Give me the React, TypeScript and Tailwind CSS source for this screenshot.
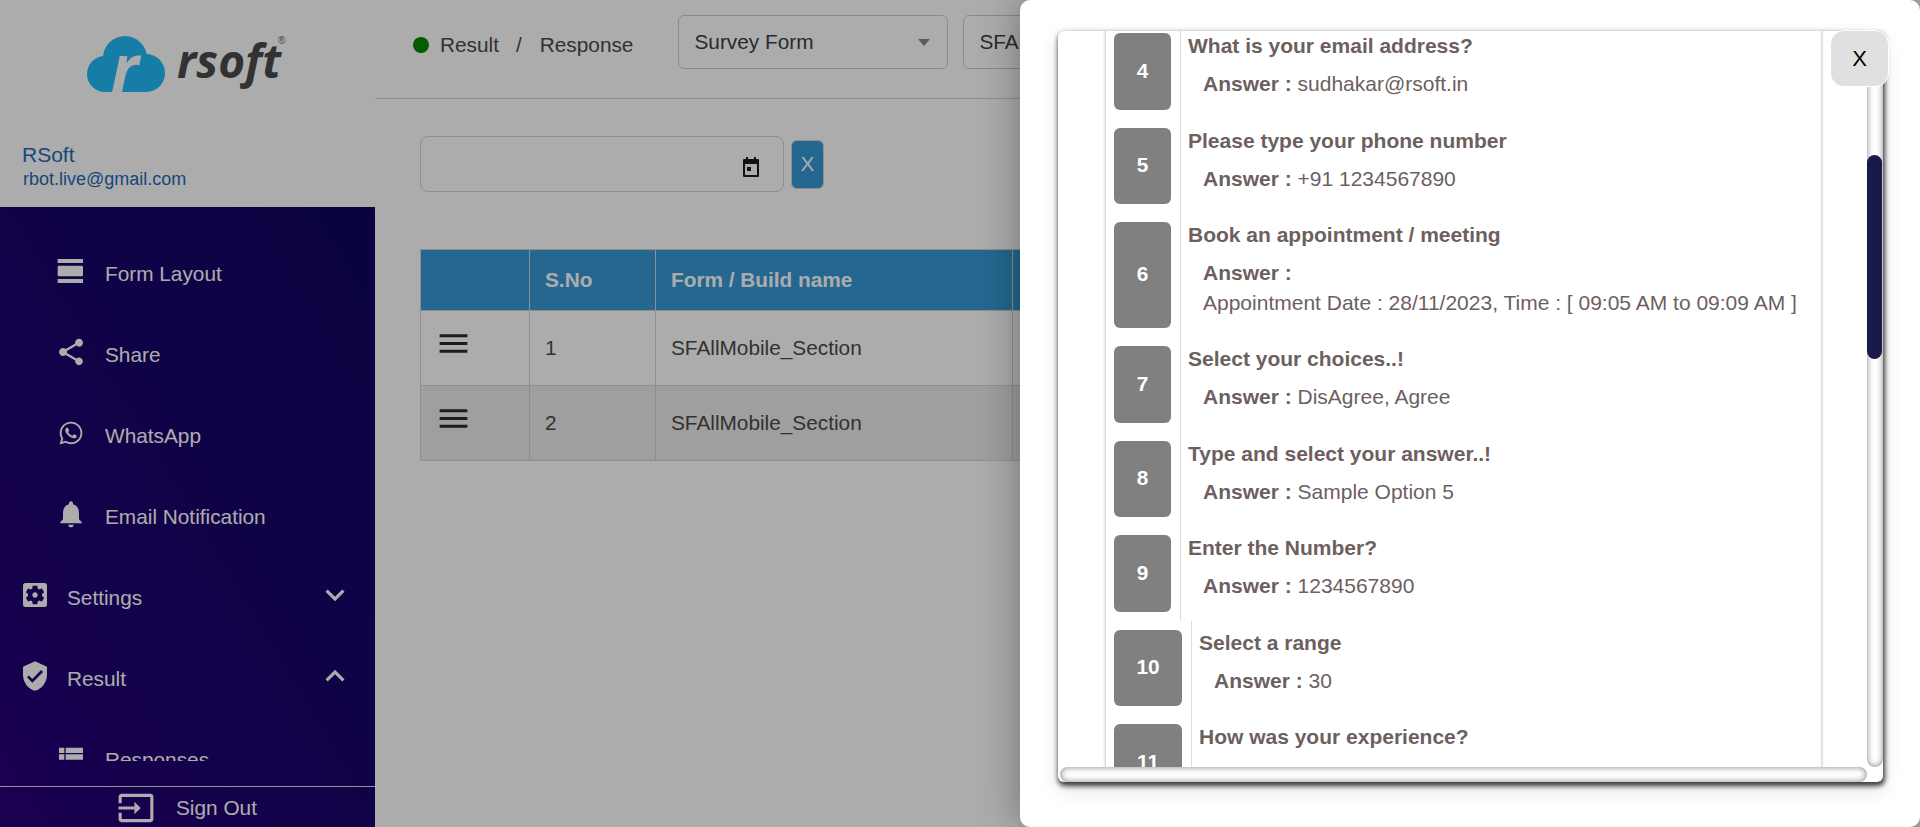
import {
  MdViewDay,
  MdShare,
  MdNotifications,
  MdSettingsApplications,
  MdVerifiedUser,
  MdKeyboardArrowDown,
  MdKeyboardArrowUp,
  MdViewList,
  MdInput,
  MdMenu,
} from "react-icons/md";
import { FaWhatsapp } from "react-icons/fa";
import type { ReactNode } from "react";

const subItem = "flex h-[81px] items-center gap-[18px] pl-[55px]";
const topItem = "flex h-[81px] items-center gap-4 pl-[19px] pr-[21px]";

function Logo() {
  return (
    <div className="flex h-[60px] items-start pl-[87px]">
      <svg width="78" height="57" viewBox="0 0 78 57" className="shrink-0">
        <g fill="#22bbf6">
          <circle cx="18" cy="38" r="18" />
          <circle cx="38" cy="22" r="22" />
          <circle cx="59" cy="37" r="19" />
          <rect x="18" y="30" width="41" height="26" />
        </g>
        <text x="24" y="56" fontSize="66" fontWeight="700" fontStyle="italic" fontFamily="'Open Sans', sans-serif" fill="#fff">
          r
        </text>
      </svg>
      <span className="ml-[12px] mt-[-8px] font-['Open_Sans',sans-serif] text-[46px] leading-[64px] font-bold italic text-[#4b4b4b]">rsoft</span>
      <span className="ml-[-3px] mt-[-1px] text-[10px] leading-3 text-[#666]">®</span>
    </div>
  );
}

function Sidebar() {
  return (
    <aside className="flex h-full w-[375px] shrink-0 flex-col bg-white shadow-[0_0_6px_rgba(0,0,0,0.35)]">
      <div className="h-[207px] shrink-0 pt-9">
        <Logo />
        <p className="mt-[47px] pl-[22px] text-[21px] leading-6 text-[#1f6bb8]">RSoft</p>
        <p className="mt-[2px] pl-[23px] text-[18px] leading-5 text-[#1f6bb8]">rbot.live@gmail.com</p>
      </div>
      <div className="flex min-h-0 flex-1 flex-col bg-gradient-to-tr from-[#260078] to-[#0e0560] text-[20.8px] text-white">
        <div className="h-[554px] shrink-0 overflow-hidden pt-[26px]">
          <div className={subItem}>
            <MdViewDay size={32} className="-mt-[6px]" />
            <span>Form Layout</span>
          </div>
          <div className={subItem}>
            <MdShare size={32} className="-mt-[6px]" />
            <span>Share</span>
          </div>
          <div className={subItem}>
            <span className="flex w-8 justify-center">
              <FaWhatsapp size={26} className="-mt-[6px]" />
            </span>
            <span>WhatsApp</span>
          </div>
          <div className={subItem}>
            <MdNotifications size={32} className="-mt-[6px]" />
            <span>Email Notification</span>
          </div>
          <div className={topItem}>
            <MdSettingsApplications size={32} className="-mt-[6px]" />
            <span className="flex-1">Settings</span>
            <MdKeyboardArrowDown size={38} className="-mt-[6px]" />
          </div>
          <div className={topItem}>
            <MdVerifiedUser size={32} className="-mt-[6px]" />
            <span className="flex-1">Result</span>
            <MdKeyboardArrowUp size={38} className="-mt-[6px]" />
          </div>
          <div className={subItem}>
            <MdViewList size={32} className="-mt-[6px]" />
            <span>Responses</span>
          </div>
        </div>
        <div className="mt-[25px] flex flex-1 items-center gap-[21px] border-t border-[#ddd] pt-[2px] pl-[117px]">
          <MdInput size={38} />
          <span>Sign Out</span>
        </div>
      </div>
    </aside>
  );
}

function Select({ label }: { label: string }) {
  return (
    <div className="flex h-[54px] w-[270px] shrink-0 items-center justify-between rounded-md border border-[#cfcfcf] pr-[17px] pl-[15px]">
      <span className="text-[20.8px] text-[#404040]">{label}</span>
      <span className="h-0 w-0 border-x-[6px] border-t-[7px] border-x-transparent border-t-[#888]" />
    </div>
  );
}

function Main() {
  const th = "border border-[#d4d4d4] pl-[15px] text-left text-[20.8px] font-bold text-white";
  const td = "border border-[#d4d4d4] pl-[15px] text-[20.8px] text-[#4a4a4a]";
  return (
    <main className="min-w-0 flex-1 overflow-hidden bg-white">
      <div className="flex h-[99px] items-center border-b border-[#d4d4d4] pb-[8px] pl-[38px]">
        <span className="h-4 w-4 shrink-0 rounded-full bg-[#008a00]" />
        <span className="ml-[11px] w-[59px] text-[20.8px] text-[#4a4a4a]">Result</span>
        <span className="ml-[17px] text-[20.8px] text-[#4a4a4a]">/</span>
        <span className="ml-[18px] text-[20.8px] text-[#4a4a4a]">Response</span>
        <div className="ml-[45px] -mt-[6px] flex gap-[15px]">
          <Select label="Survey Form" />
          <Select label="SFAllMobile_Section" />
        </div>
      </div>
      <div className="pt-[37px] pl-[45px]">
        <div className="flex items-center gap-[7px]">
          <div className="flex h-[56px] w-[364px] items-center justify-end rounded-lg border border-[#d4d4d4] pr-[23px]">
            <svg width="18" height="22" viewBox="0 0 18 22" className="mt-[5px] text-[#1c1c1c]">
              <path fill="currentColor" d="M4 1h2v2h6V1h2v2h2a1 1 0 0 1 1 1v16a1 1 0 0 1-1 1H2a1 1 0 0 1-1-1V4a1 1 0 0 1 1-1h2V1zM3 8v11h12V8H3zm2 3h4v4H5v-4z" />
            </svg>
          </div>
          <button className="h-[49px] w-[33px] rounded-md border border-[#d4d4d4] bg-[#3699d6] text-[20.8px] text-white">X</button>
        </div>
        <table className="mt-[57px] w-[900px] table-fixed border-collapse">
          <colgroup>
            <col className="w-[109px]" />
            <col className="w-[126px]" />
            <col className="w-[357px]" />
            <col />
          </colgroup>
          <thead>
            <tr className="h-[61px] bg-[#3699d6]">
              <th className={th} />
              <th className={th}>S.No</th>
              <th className={th}>Form / Build name</th>
              <th className={th} />
            </tr>
          </thead>
          <tbody>
            {[1, 2].map((n) => (
              <tr key={n} className={n === 2 ? "h-[75px] bg-[#ececec]" : "h-[75px]"}>
                <td className={td}>
                  <MdMenu size={37} className="-mt-[10px] ml-[-1px] text-[#2a2a2a]" />
                </td>
                <td className={td}>{n}</td>
                <td className={td}>SFAllMobile_Section</td>
                <td className={td} />
              </tr>
            ))}
          </tbody>
        </table>
      </div>
    </main>
  );
}

function Item({ n, question, tall, wide, children }: { n: number; question: string; tall?: boolean; wide?: boolean; children: ReactNode }) {
  return (
    <div className={tall ? "flex h-[124px]" : "flex h-[94.5px]"}>
      <div className={wide ? "my-[9px] flex w-[68px] shrink-0 items-center justify-center rounded-md bg-[#808080] pb-[2px] text-[20.8px] font-bold text-white" : "my-[9px] flex w-[57px] shrink-0 items-center justify-center rounded-md bg-[#808080] pb-[2px] text-[20.8px] font-bold text-white"}>
        {n}
      </div>
      <div className="ml-[9px] flex-1 border-l border-[#ddd] pt-[10px] pl-[7px] text-[#6d5f5f]">
        <p className="text-[21px] leading-6 font-bold">{question}</p>
        {children}
      </div>
    </div>
  );
}

function Answer({ value }: { value?: string }) {
  return (
    <p className="mt-[14px] pl-[15px] text-[21px] leading-6">
      <b>Answer :</b> {value}
    </p>
  );
}

function Modal() {
  return (
    <div className="absolute inset-y-0 right-0 w-[900px] rounded-[10px] bg-white pt-[31px] pl-[38px] shadow-[0_0_40px_rgba(0,0,0,0.35)]">
      <div className="relative grid h-[751px] w-[825px] grid-cols-[1fr_16px] grid-rows-[1fr_15px] rounded-md shadow-[1px_3px_5px_1px_rgba(0,0,0,0.75),0_8px_20px_rgba(0,0,0,0.12)]">
        <div className="min-h-0 overflow-hidden">
          <div className="-mt-[7px] ml-[47px] h-[760px] w-[717px] border-x border-[#ddd] pl-2 shadow-[0_0_3px_#ccc]">
            <Item n={4} question="What is your email address?">
              <Answer value="sudhakar@rsoft.in" />
            </Item>
            <Item n={5} question="Please type your phone number">
              <Answer value="+91 1234567890" />
            </Item>
            <Item n={6} question="Book an appointment / meeting" tall>
              <Answer />
              <p className="mt-[6px] pl-[15px] text-[21px] leading-6">Appointment Date : 28/11/2023, Time : [ 09:05 AM to 09:09 AM ]</p>
            </Item>
            <Item n={7} question="Select your choices..!">
              <Answer value="DisAgree, Agree" />
            </Item>
            <Item n={8} question="Type and select your answer..!">
              <Answer value="Sample Option 5" />
            </Item>
            <Item n={9} question="Enter the Number?">
              <Answer value="1234567890" />
            </Item>
            <Item n={10} question="Select a range" wide>
              <Answer value="30" />
            </Item>
            <Item n={11} question="How was your experience?" wide>
              <Answer value="Good" />
            </Item>
          </div>
        </div>
        <div className="rounded-lg pt-[124px] shadow-[inset_0_0_6px_rgba(0,0,0,0.5)]">
          <div className="h-[204px] w-[15px] rounded-lg bg-[#1a1a4a]" />
        </div>
        <div className="ml-[2px] rounded-lg shadow-[inset_0_0_6px_rgba(0,0,0,0.5)]" />
        <div />
        <button className="absolute top-[-1px] right-[-6px] flex h-[57px] w-[59px] items-center justify-center rounded-[14px] border border-white bg-[#e0e0e0] text-[22px] text-black">
          X
        </button>
      </div>
    </div>
  );
}

export default function App() {
  return (
    <div className="relative flex h-[827px] w-[1920px] overflow-hidden font-['Liberation_Sans',Arial,sans-serif]">
      <Sidebar />
      <Main />
      <div className="absolute inset-0 bg-[rgba(0,0,0,0.325)]" />
      <Modal />
    </div>
  );
}
